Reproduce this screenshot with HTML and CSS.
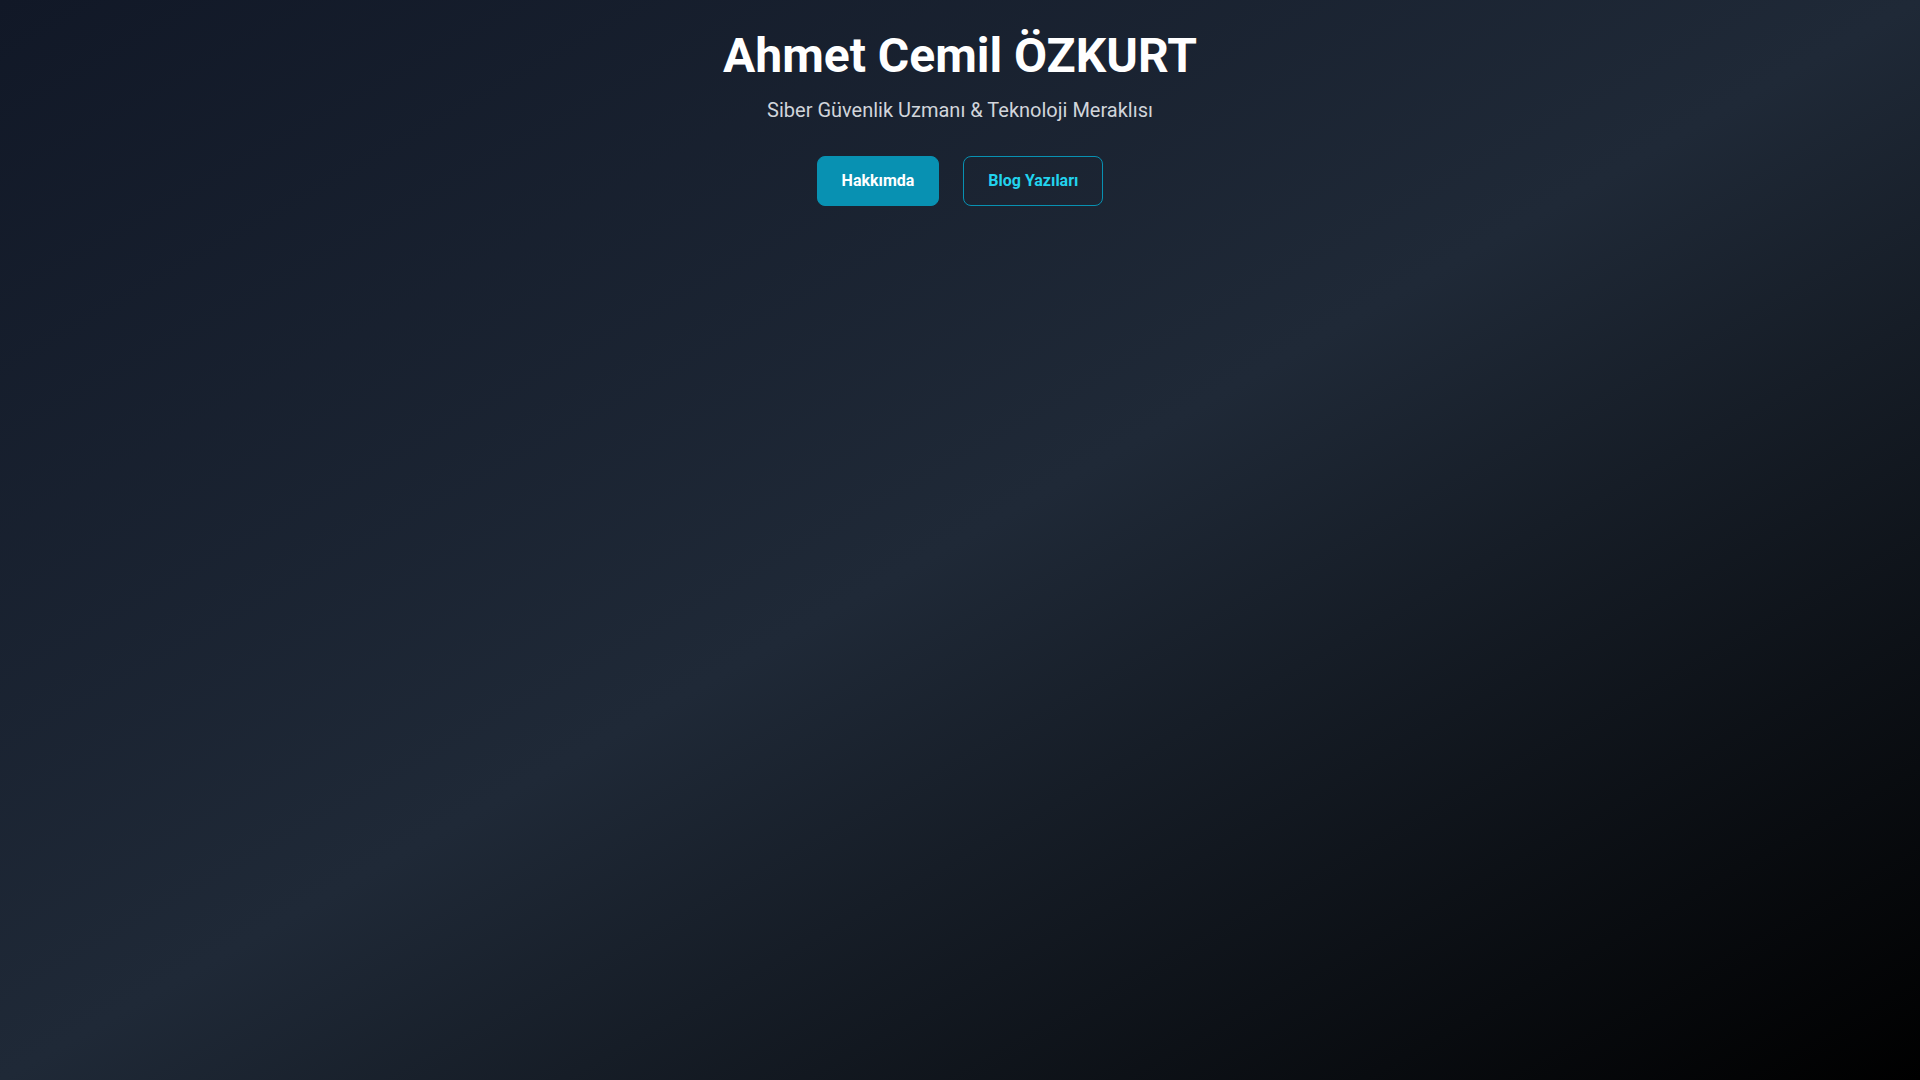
FILE: index.html
```html
<!DOCTYPE html>
<html lang="tr">
<head>
<meta charset="utf-8">
<title>Ahmet Cemil ÖZKURT</title>
<link rel="stylesheet" href="styles.css">
</head>
<body>
<div class="page">
  <header class="hero">
    <h1 class="title">Ahmet Cemil ÖZKURT</h1>
    <p class="subtitle">Siber Güvenlik Uzmanı &amp; Teknoloji Meraklısı</p>
    <nav class="actions">
      <a class="btn btn-primary" href="#hakkimda">Hakkımda</a>
      <a class="btn btn-outline" href="#blog">Blog Yazıları</a>
    </nav>
  </header>
</div>
</body>
</html>
```

FILE: styles.css
```css
* { box-sizing: border-box; }
html, body { margin: 0; padding: 0; }
body {
  font-family: Roboto, "Liberation Sans", sans-serif;
  color: #fff;
}
.page {
  min-height: 100vh;
  background: linear-gradient(to bottom right, #111827, #1f2937, #000000);
}
.hero {
  padding: 32px 16px;
  text-align: center;
}
.title {
  margin: 0 0 16px;
  font-size: 48px;
  line-height: 48px;
  font-weight: 700;
  color: #ffffff;
}
.subtitle {
  margin: 0;
  font-size: 20px;
  line-height: 28px;
  color: #d1d5db;
}
.actions {
  margin-top: 32px;
  display: flex;
  justify-content: center;
  gap: 24px;
}
.btn {
  display: inline-block;
  padding: 12px 24px;
  font-size: 16px;
  line-height: 24px;
  font-weight: 700;
  text-decoration: none;
  border-radius: 8px;
  border: 1px solid transparent;
}
.btn-primary {
  background: #0891b2;
  border-color: #0891b2;
  color: #ffffff;
}
.btn-outline {
  background: transparent;
  border-color: #0891b2;
  color: #22d3ee;
}
```
